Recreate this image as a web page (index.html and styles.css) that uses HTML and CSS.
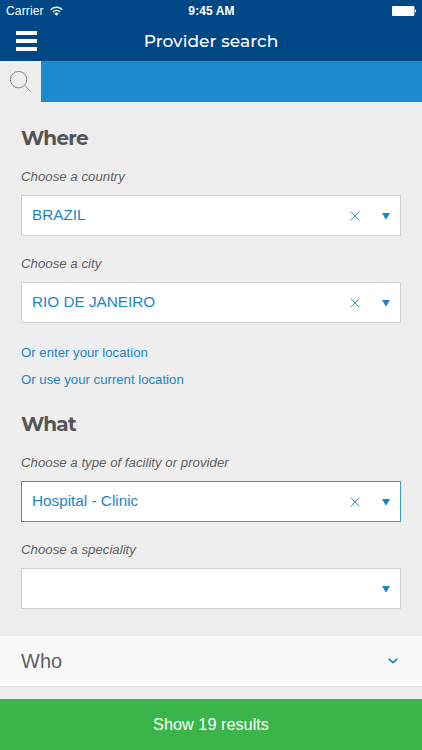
FILE: index.html
```html
<!DOCTYPE html>
<html lang="en">
<head>
    <meta charset="UTF-8">
    <meta name="viewport" content="width=device-width, initial-scale=1.0">
    <title>Provider search</title>
    <link rel="stylesheet" href="styles.css">
</head>
<body>
    <header class="header">
        <div class="status-bar">
            <div class="carrier">
                <span>Carrier</span>
                <svg class="wifi" width="13" height="10" viewBox="0 0 13 10">
                    <path d="M.7 3.7a8.2 8.2 0 0 1 11.6 0M2.9 5.9a5.1 5.1 0 0 1 7.2 0" fill="none" stroke="#fff" stroke-width="1.4"/>
                    <path d="M6.5 9.8L4.3 7.5a3.1 3.1 0 0 1 4.4 0z" fill="#fff"/>
                </svg>
            </div>
            <div class="time">9:45 AM</div>
            <div class="battery">
                <svg width="25" height="10" viewBox="0 0 25 10">
                    <rect x="0" y="0" width="22.4" height="10" rx="1" fill="#fff"/>
                    <path d="M23 3.3a1.8 1.8 0 0 1 0 3.4z" fill="#fff"/>
                </svg>
            </div>
        </div>
        <div class="title-bar">
            <button type="button" class="menu-button" aria-label="Menu">
                <span></span>
                <span></span>
                <span></span>
            </button>
            <h1>Provider search</h1>
        </div>
    </header>

    <nav class="tabs">
        <div class="tab">
            <svg width="24" height="24" viewBox="0 0 24 24" fill="none" stroke="#7d7d7d" stroke-width="0.9">
                <circle cx="10.6" cy="9.6" r="8.2"/>
                <path d="M16.9 15.6l6 6.2"/>
            </svg>
        </div>
    </nav>

    <main class="search-form">
        <section class="where">
            <h2>Where</h2>
            <p class="label">Choose a country</p>
            <div class="select">
                <span class="value">BRAZIL</span>
                <svg class="clear" width="10" height="10" viewBox="0 0 10 10"><path d="M.6.6l8.8 8.8M9.4.6L.6 9.4"/></svg>
                <svg class="arrow" width="8" height="6" viewBox="0 0 8 6"><path d="M0 0h8L4.5 6h-1z"/></svg>
            </div>
            <p class="label">Choose a city</p>
            <div class="select">
                <span class="value">RIO DE JANEIRO</span>
                <svg class="clear" width="10" height="10" viewBox="0 0 10 10"><path d="M.6.6l8.8 8.8M9.4.6L.6 9.4"/></svg>
                <svg class="arrow" width="8" height="6" viewBox="0 0 8 6"><path d="M0 0h8L4.5 6h-1z"/></svg>
            </div>
            <div class="links">
                <a href="#">Or enter your location</a>
                <a href="#">Or use your current location</a>
            </div>
        </section>

        <section class="what">
            <h2>What</h2>
            <p class="label">Choose a type of facility or provider</p>
            <div class="select active">
                <span class="value">Hospital - Clinic</span>
                <svg class="clear" width="10" height="10" viewBox="0 0 10 10"><path d="M.6.6l8.8 8.8M9.4.6L.6 9.4"/></svg>
                <svg class="arrow" width="8" height="6" viewBox="0 0 8 6"><path d="M0 0h8L4.5 6h-1z"/></svg>
            </div>
            <p class="label">Choose a speciality</p>
            <div class="select">
                <span class="value"></span>
                <svg class="arrow" width="8" height="6" viewBox="0 0 8 6"><path d="M0 0h8L4.5 6h-1z"/></svg>
            </div>
        </section>
    </main>

    <div class="who">
        <span>Who</span>
        <svg width="10" height="6" viewBox="0 0 10 6" fill="none" stroke="#1a86c8" stroke-width="1.8">
            <path d="M.7.8L5 4.6 9.3.8"/>
        </svg>
    </div>

    <button type="button" class="show-button">Show 19 results</button>
</body>
</html>
```

FILE: styles.css
```css
* {
    box-sizing: border-box;
}
body {
    font-family: "Liberation Sans", Arial, sans-serif;
    background-color: #eeeeee;
    color: #5f5f5f;
    margin: 0;
    height: 750px;
    display: flex;
    flex-direction: column;
    overflow: hidden;
}
h1, h2, p {
    margin: 0;
}
.header {
    height: 61px;
    background-color: #004785;
    color: #fff;
}
.status-bar {
    display: grid;
    grid-template-columns: 1fr auto 1fr;
    align-items: center;
    height: 22px;
    padding: 0 5px 0 6px;
    font-size: 12px;
}
.carrier {
    display: flex;
    align-items: center;
    gap: 6px;
    letter-spacing: 0.15px;
}
.wifi {
    margin-top: -1px;
}
.time {
    font-weight: bold;
    font-size: 12px;
    letter-spacing: 0.1px;
    padding-bottom: 1px;
}
.battery {
    display: flex;
    justify-content: flex-end;
}
.title-bar {
    display: grid;
    grid-template-columns: 54px 1fr 54px;
    height: 39px;
}
.menu-button {
    display: flex;
    flex-direction: column;
    gap: 4px;
    margin: 0;
    padding: 9px 0 0 16px;
    border: none;
    background: none;
}
.menu-button span {
    width: 21px;
    height: 4px;
    background-color: #fff;
}
h1 {
    font-family: Montserrat, Inter, sans-serif;
    font-size: 17px;
    font-weight: 500;
    line-height: 38px;
    text-align: center;
    letter-spacing: 0.05px;
}
.tabs {
    height: 41px;
    background-color: #1a8bcd;
}
.tab {
    width: 41px;
    height: 41px;
    padding: 9px 0 0 8px;
    background-color: #eeeeee;
}
.search-form {
    height: 534px;
    padding: 24px 21px 0;
}
h2 {
    font-family: Montserrat, Inter, sans-serif;
    font-size: 20px;
    font-weight: 700;
    line-height: 24px;
    color: #555;
    letter-spacing: -0.8px;
}
.label {
    font-size: 13.25px;
    font-style: italic;
    line-height: 16px;
    margin: 19px 0 10px;
}
.select + .label {
    margin: 20px 0 10px;
}
.select {
    display: flex;
    align-items: center;
    height: 41px;
    padding: 0 10px;
    border: 1px solid #d3d1d1;
    background-color: #fff;
}
.select.active {
    border-color: #3c99cf;
}
.value {
    flex: 1;
    padding-bottom: 2px;
    font-size: 15.3px;
    color: #1a86c8;
}
.clear {
    margin-right: 22px;
    fill: none;
    stroke: #3c93c8;
    stroke-width: 1;
}
.arrow {
    margin-top: 1px;
    fill: #1a86c8;
}
.links {
    display: flex;
    flex-direction: column;
    gap: 11px;
    margin: 22px 0 24px;
}
.links a {
    font-size: 13.2px;
    line-height: 16px;
    color: #1a86c8;
    text-decoration: none;
}
.who {
    display: flex;
    justify-content: space-between;
    align-items: center;
    height: 51px;
    padding: 0 24px 0 21px;
    border-bottom: 1px solid #e3e3e3;
    background-color: #f9f9f9;
    font-size: 20px;
}
.show-button {
    height: 51px;
    margin: auto 0 0;
    padding: 0 0 1px;
    border: none;
    background-color: #39b54a;
    color: #fff;
    font-family: inherit;
    font-size: 16.3px;
}
```
